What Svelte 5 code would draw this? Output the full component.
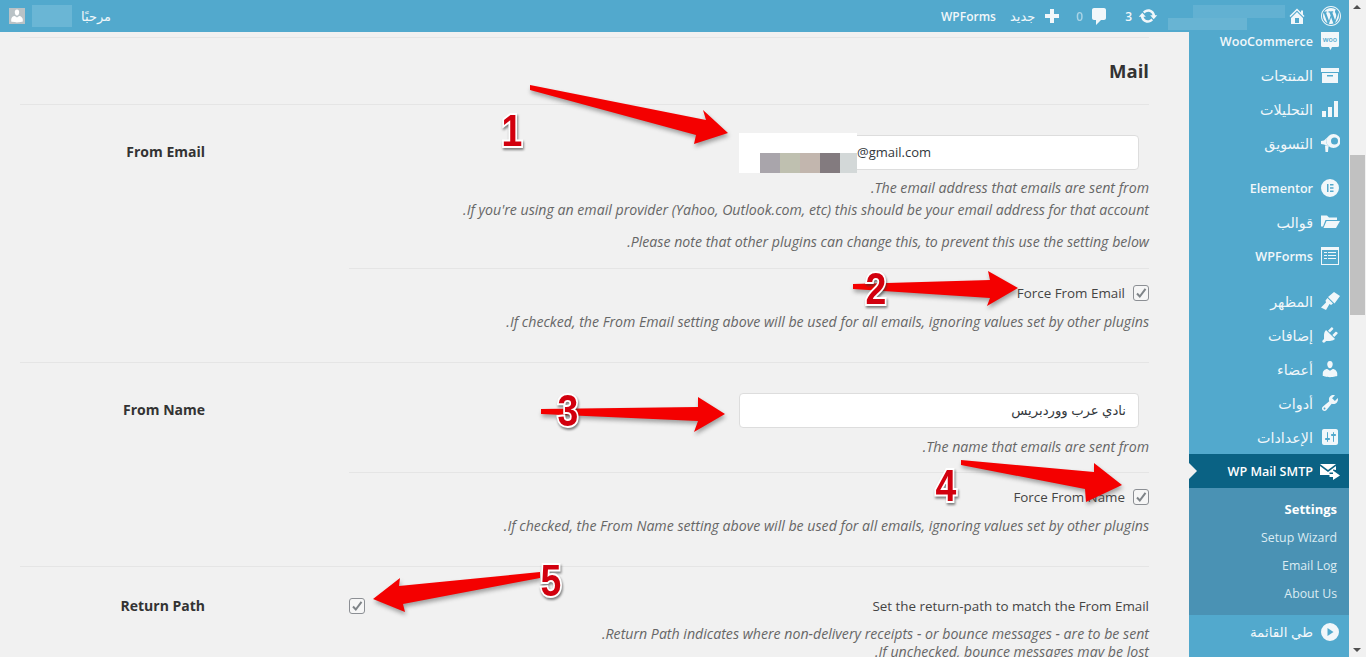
<script>
    const icons = {
        wordpress: "M20 10c0-5.52-4.48-10-10-10S0 4.48 0 10s4.48 10 10 10 10-4.48 10-10zM10 1.01c4.96 0 8.99 4.02 8.99 8.99s-4.03 8.99-8.99 8.99S1.01 14.96 1.01 10 5.04 1.01 10 1.01zM8.01 14.82L4.96 6.61c.49-.03 1.05-.08 1.05-.08.43-.05.38-1.01-.06-.99 0 0-1.29.1-2.13.1-.15 0-.33 0-.52-.01 1.44-2.17 3.9-3.6 6.7-3.6 2.09 0 3.99.79 5.41 2.09-.6-.08-1.45.35-1.45 1.42 0 .66.38 1.22.79 1.88.31.54.5 1.22.5 2.21 0 1.34-1.27 4.48-1.27 4.48l-2.71-7.5c.48-.03.75-.16.75-.16.43-.05.38-1.1-.05-1.08 0 0-1.3.11-2.14.11-.78 0-2.11-.11-2.11-.11-.43-.02-.48 1.06-.05 1.08l.84.08 1.12 3.04zm6.02 2.15L16.64 10s.67-1.69.39-3.81c.63 1.14.94 2.42.94 3.81 0 2.96-1.56 5.58-3.94 6.97zM2.68 6.77L6.5 17.25c-2.67-1.3-4.47-4.08-4.47-7.25 0-1.16.2-2.23.65-3.23zm7.45 4.53l2.29 6.25c-.75.27-1.57.42-2.42.42-.72 0-1.41-.11-2.06-.3z",
        home: "M16 8.5l1.53 1.53-1.06 1.06L10 4.62l-6.47 6.47-1.06-1.06L10 2.5l4 4v-2h2v4zm-6-2.46l6 5.99V18H4v-5.97zM12 17v-5H8v5h4z",
        updates: "M10.2 3.28c3.53 0 6.43 2.61 6.92 6h2.08l-3.5 4-3.5-4h2.32c-.45-1.97-2.21-3.45-4.32-3.45-1.45 0-2.73.71-3.54 1.78L4.95 5.66C6.23 4.2 8.11 3.28 10.2 3.28zm-.4 13.44c-3.52 0-6.43-2.61-6.92-6H.8l3.5-4c1.17 1.33 2.33 2.67 3.5 4H5.48c.45 1.97 2.21 3.45 4.32 3.45 1.45 0 2.73-.71 3.54-1.78l1.71 1.95c-1.28 1.46-3.15 2.38-5.25 2.38z",
        comment: "M5 2h10c1.1 0 2 .9 2 2v8c0 1.1-.9 2-2 2h-3l-5 5v-5H5c-1.1 0-2-.9-2-2V4c0-1.1.9-2 2-2z",
        plus: "M17 8v4h-5v5H8v-5H3V8h5V3h4v5h5z",
        woo: "M2.5 0h15A1.5 1.5 0 0 1 19 1.500v13a1.500 1.500 0 0 1-1.500 1.500H12l-1.500 3L9 16H2.500A1.500 1.500 0 0 1 1 14.500v-13A1.500 1.500 0 0 1 2.500 0z",
        archive: "M1 3h18v4H1z M2 8h16v10H2z M7 10v1.500h6V10z",
        chart: "M2 12h4v6H2z M8 8h4v10H8z M14 2h4v16h-4z",
        megaphone: "M13.500 1a7 7 0 1 1 0 14 7 7 0 0 1 0-14z M14.500 4.500a3.500 3.500 0 1 0 0 7 3.500 3.500 0 0 0 0-7z M1 8v3l3 .5 5.400 2.500A7 7 0 0 1 9.400 2.500L4 7.500z M5 12.500l3.500 1-.5 5.500H5.500z",
        elementor: "M10 1a9 9 0 1 1 0 18 9 9 0 0 1 0-18z M7 6v8h1.500V6z M10 6v1.500h3.500V6z M10 9.200v1.500h3.500V9.200z M10 12.500V14h3.500v-1.500z",
        folder: "M1 3.500h6l2 2h8V8H5.500L3 14.500H1z M6.500 9H20l-4 7H3.500z",
        forms: "M1 1h18v18H1z M2 4v14h16V4z M4 6h3v1H4z M8 6h8v1H8z M4 9h3v1H4z M8 9h8v1H8z M4 12h3v1H4z M8 12h8v1H8z",
        brush: "M20 5l-6-4-6 5 6.500 6.500z M7.500 7l5.500 5.500-2 1.500-1.500-1-3.500 6-5-2.500 5-5-.5-2z",
        plugin: "M13.110 4.360L9.870 7.600 8 5.730l3.240-3.240c.35-.34 1.050-.2 1.560.32.52.51.66 1.210.31 1.550zm-8 1.770l.91-1.120 9.010 9.010-1.190.84c-.71.71-2.630 1.160-3.820 1.160H6.140L4.900 17.260c-.59.59-1.540.59-2.120 0-.59-.58-.59-1.530 0-2.120l1.240-1.240v-3.880c0-1.130.4-3.190 1.090-3.890zm7.260 3.970l3.240-3.240c.34-.35 1.040-.21 1.550.31.52.51.66 1.210.31 1.550l-3.240 3.250z",
        user: "M10 9.250c-2.270 0-2.730-3.440-2.730-3.440C7 4.020 7.820 2 9.970 2c2.160 0 2.980 2.020 2.710 3.810 0 0-.41 3.440-2.680 3.440zm0 2.570L12.720 10c2.390 0 4.520 2.330 4.520 4.530v2.490s-3.650 1.130-7.240 1.130c-3.650 0-7.240-1.130-7.240-1.130v-2.490c0-2.250 1.940-4.480 4.470-4.480z",
        tools: "M16.680 9.770c-1.340 1.340-3.300 1.670-4.950.99l-5.410 6.520c-.99.99-2.590.99-3.580 0s-.99-2.590 0-3.570l6.520-5.420c-.68-1.650-.35-3.610.99-4.950 1.280-1.280 3.120-1.620 4.720-1.060l-2.890 2.890 2.820 2.820 2.860-2.870c.53 1.580.18 3.390-1.080 4.670zM3.810 16.210c.4.39 1.040.39 1.430 0 .4-.4.4-1.040 0-1.430-.39-.4-1.030-.4-1.430 0-.39.39-.39 1.030 0 1.430z",
        settings: "M18 16V4c0-1.100-.9-2-2-2H4c-1.100 0-2 .9-2 2v12c0 1.100.9 2 2 2h12c1.100 0 2-.9 2-2zM8 11h1c.55 0 1 .45 1 1s-.45 1-1 1H8v1.500c0 .28-.22.5-.5.5s-.5-.22-.5-.5V13H6c-.55 0-1-.45-1-1s.45-1 1-1h1V5.500c0-.28.22-.5.5-.5s.5.22.5.5V11zm5-2h-1c-.55 0-1-.45-1-1s.45-1 1-1h1V5.500c0-.28.22-.5.5-.5s.5.22.5.5V7h1c.55 0 1 .45 1 1s-.45 1-1 1h-1v5.500c0 .28-.22.5-.5.5s-.5-.22-.5-.5V9z",
        mail: "M0 3h16L8 9z M0 5v9h9.500v-2.500H13V8.500L16 9V5L8 11z M13 9.500l7 5-7 4.500v-3H9.500v-3H13z",
        collapse: "M10 1a9 9 0 1 1 0 18 9 9 0 0 1 0-18z M7.500 6v8l6-4z"
    };

    const menu = [
        { label: "WooCommerce", icon: "woo", iconText: "woo", latin: true },
        { label: "المنتجات", icon: "archive" },
        { label: "التحليلات", icon: "chart" },
        { label: "التسويق", icon: "megaphone", gapAfter: true },
        { label: "Elementor", icon: "elementor", latin: true },
        { label: "قوالب", icon: "folder" },
        { label: "WPForms", icon: "forms", gapAfter: true, latin: true },
        { label: "المظهر", icon: "brush" },
        { label: "إضافات", icon: "plugin" },
        { label: "أعضاء", icon: "user" },
        { label: "أدوات", icon: "tools" },
        { label: "الإعدادات", icon: "settings" }
    ];
    const submenu = ["Settings", "Setup Wizard", "Email Log", "About Us"];

    // tail top, upper joint, upper barb, tip, lower barb, lower joint, tail bottom
    const arrows = [
        "530,85 706,120 703,110 728,133 694,144 696,135 530,90",
        "853,284 990,280 988,271 1018,288 987,306 990,298 853,289",
        "541,409 698,407 698,397 725,414 694,432 698,421 541,414",
        "961,460 1094,472 1094,463 1122,485 1086,502 1085,489 961,465",
        "540,572 399,586 400,578 373,599 405,612 403,604 540,578"
    ];
    const numbers = [
        { n: 1, x: 512, y: 146 },
        { n: 2, x: 876, y: 304 },
        { n: 3, x: 568, y: 426 },
        { n: 4, x: 946, y: 501 },
        { n: 5, x: 551, y: 596 }
    ];
</script>

{#snippet icon(name, size = 20)}
    <svg class="icon" width={size} height={size} viewBox="0 0 20 20" aria-hidden="true">
        <path fill-rule="evenodd" d={icons[name]} />
    </svg>
{/snippet}

{#snippet check()}
    <span class="check">
        <svg width="12" height="12" viewBox="0 0 12 12" aria-hidden="true">
            <path d="M2 6.500l2.800 3L10.500 1.800" fill="none" stroke="#7f8488" stroke-width="2" />
        </svg>
    </span>
{/snippet}

<div class="shell">
    <div class="page" dir="rtl">
        <header class="topbar">
            <span class="tb-wp">{@render icon("wordpress", 20)}</span>
            <span class="tb-home">{@render icon("home", 20)}</span>
            <span class="tb-blur"><i></i><i></i></span>
            <span class="tb-item tb-updates">{@render icon("updates", 20)}<b>3</b></span>
            <span class="tb-item tb-comments">{@render icon("comment", 20)}<b class="faded">0</b></span>
            <span class="tb-item tb-new">{@render icon("plus", 20)}<span>جديد</span></span>
            <span class="tb-forms">WPForms</span>
            <span class="tb-hello">مرحبًا</span>
            <span class="tb-name"></span>
            <span class="avatar">
                <svg width="16" height="16" viewBox="0 0 20 20" aria-hidden="true"><path fill="#fff" d={icons.user} /></svg>
            </span>
        </header>

        <div class="body">
            <nav class="sidebar">
                <ul class="menu">
                    {#each menu as item}
                        <li class:gap={item.gapAfter} class:latin={item.latin}>
                            <span class="m-icon">
                                <svg width="20" height="20" viewBox="0 0 20 20" aria-hidden="true">
                                    <path fill-rule="evenodd" d={icons[item.icon]} />
                                    {#if item.iconText}<text x="10" y="10.500" class="woo" text-anchor="middle">{item.iconText}</text>{/if}
                                </svg>
                            </span>
                            <span>{item.label}</span>
                        </li>
                    {/each}
                    <li class="active latin">
                        <span class="m-icon">{@render icon("mail", 20)}</span>
                        <span>WP Mail SMTP</span>
                    </li>
                </ul>
                <ul class="submenu">
                    {#each submenu as sub, i}
                        <li class:current={i === 0}>{sub}</li>
                    {/each}
                </ul>
                <div class="collapse">
                    <span class="m-icon">{@render icon("collapse", 20)}</span>
                    <span>طي القائمة</span>
                </div>
            </nav>

            <main class="content">
                <h2>Mail</h2>

                <section class="row first">
                    <div class="label" dir="ltr">From Email</div>
                    <div class="field">
                        <div class="input" dir="ltr">@gmail.com<span class="redact"><i></i><i></i><i></i><i></i><i></i></span></div>
                        <p class="desc top">The email address that emails are sent from.</p>
                        <p class="desc">If you're using an email provider (Yahoo, Outlook.com, etc) this should be your email address for that account.</p>
                        <p class="desc para">Please note that other plugins can change this, to prevent this use the setting below.</p>
                        <hr />
                        <div class="opt">{@render check()}<span>Force From Email</span></div>
                        <p class="desc after">If checked, the From Email setting above will be used for all emails, ignoring values set by other plugins.</p>
                    </div>
                </section>

                <section class="row">
                    <div class="label" dir="ltr">From Name</div>
                    <div class="field">
                        <div class="input name">نادي عرب ووردبريس</div>
                        <p class="desc top">The name that emails are sent from.</p>
                        <hr class="near" />
                        <div class="opt">{@render check()}<span>Force From Name</span></div>
                        <p class="desc after">If checked, the From Name setting above will be used for all emails, ignoring values set by other plugins.</p>
                    </div>
                </section>

                <section class="row last">
                    <div class="label" dir="ltr">Return Path</div>
                    <div class="field">
                        <div class="opt spread"><span>Set the return-path to match the From Email</span>{@render check()}</div>
                        <p class="desc">Return Path indicates where non-delivery receipts - or bounce messages - are to be sent.</p>
                        <p class="desc tight">If unchecked, bounce messages may be lost.</p>
                    </div>
                </section>
            </main>
        </div>
    </div>

    <div class="scrollbar">
        <span class="up"></span>
        <span class="thumb"></span>
        <span class="down"></span>
    </div>

    <svg class="annotations" width="1366" height="657" viewBox="0 0 1366 657" aria-hidden="true">
        {#each arrows as points}
            <polygon class="arrow" {points} fill="#f40000" />
        {/each}
        {#each numbers as num}
            <text class="num" transform="translate({num.x} {num.y}) scale(.85 1)" text-anchor="middle">{num.n}</text>
        {/each}
    </svg>
</div>

<style>
    :global(body) {
        margin: 0;
        background: #f1f1f1;
    }

    .shell {
        position: relative;
        display: flex;
        width: 1366px;
        height: 657px;
        overflow: hidden;
        font-family: "Open Sans", "DejaVu Sans", sans-serif;
        font-size: 13px;
        color: #444;
    }
    .page {
        flex: 1;
        min-width: 0;
        display: flex;
        flex-direction: column;
    }
    .icon { fill: currentColor; display: block; }

    /* top bar */
    .topbar {
        flex: none;
        height: 32px;
        background: #52a9cd;
        color: #f1f7fa;
        display: flex;
        align-items: center;
        padding: 0 8px 0 9px;
        position: relative;
        z-index: 2;
        font-size: 12px;
    }
    .tb-wp { margin-inline-end: 14px; }
    .tb-home { margin-inline-end: 2px; }
    .tb-blur {
        width: 117px;
        height: 25px;
        display: flex;
        flex-direction: column;
        margin: 3px 0 0;
        margin-inline-end: 10px;
    }
    .tb-blur i { display: block; height: 13px; background: #62b1d2; width: 92px; }
    .tb-blur i:last-child { height: 12px; width: 79px; margin-right: 38px; background: #68b4d3; }
    .tb-item { display: flex; align-items: center; gap: 6px; }
    .tb-item b { font-weight: 600; }
    .tb-item .faded { opacity: .55; }
    .tb-updates { margin-inline-end: 16px; }
    .tb-comments { margin-inline-end: 14px; }
    .tb-new { margin-inline-end: 14px; gap: 7px; font-size: 13px; }
    .tb-forms { font-weight: 600; font-size: 12px; }
    .tb-hello { margin-inline-start: auto; font-size: 13px; }
    .tb-name { width: 40px; height: 22px; margin: 0 9px 0 7px; background: #6ab6d5; }
    .avatar {
        width: 16px;
        height: 16px;
        background: #b9c2c6;
        display: block;
    }
    .avatar svg { display: block; }

    .body {
        flex: 1;
        min-height: 0;
        display: flex;
    }

    /* sidebar */
    .sidebar {
        flex: none;
        width: 160px;
        background: #52a9cd;
        color: #f1f7fa;
        overflow: hidden;
        font-size: 14.3px;
    }
    .menu, .submenu {
        list-style: none;
        margin: 0;
        padding: 0;
    }
    .menu { margin-top: -8px; }
    .menu li, .collapse {
        height: 34px;
        display: flex;
        align-items: center;
        gap: 7px;
        padding-right: 9px;
    }
    .menu li.latin { font-weight: 600; font-size: 12.6px; }
    .menu li.gap { margin-bottom: 11px; }
    .m-icon { width: 20px; height: 20px; flex: none; }
    .m-icon svg { fill: currentColor; display: block; }
    .woo { font-size: 7px; fill: #52a9cd; font-family: "Open Sans", sans-serif; font-weight: 600; }
    .menu li.active {
        position: relative;
        background: #0a6284;
        color: #fff;
    }
    .menu li.active::after {
        content: "";
        position: absolute;
        left: 0;
        top: 9px;
        border: 8px solid transparent;
        border-left-color: #f1f1f1;
    }
    .submenu {
        background: #4a92b4;
        color: #dcecf3;
        padding: 7px 12px 7px 0;
        font-size: 12.3px;
        text-align: right;
    }
    .submenu li { height: 28px; line-height: 28px; }
    .submenu li.current { height: 29px; color: #fff; font-weight: 700; font-size: 13px; }
    .collapse { font-size: 13.5px; }

    /* settings */
    .content {
        flex: 1;
        min-width: 0;
        padding: 5px 40px 0 20px;
        overflow: hidden;
    }
    h2 {
        margin: 0;
        border-top: 1px solid #e5e5e5;
        height: 66px;
        line-height: 66px;
        font-size: 18.5px;
        font-weight: 700;
        color: #333;
        text-align: right;
    }
    .row {
        display: flex;
        flex-direction: row-reverse;
        border-top: 1px solid #e5e5e5;
        padding-top: 30px;
        height: 173px;
    }
    .row.first { height: 227px; }
    .row.last { padding-top: 22px; height: auto; }
    .label {
        flex: none;
        width: 329px;
        box-sizing: border-box;
        padding-right: 144px;
        text-align: right;
        font-weight: 700;
        font-size: 14px;
        line-height: 34px;
        color: #333;
    }
    .field { flex: 1; min-width: 0; }
    .input {
        position: relative;
        width: 400px;
        height: 35px;
        box-sizing: border-box;
        margin-right: 10px;
        background: #fff;
        border: 1px solid #ddd;
        border-radius: 4px;
        line-height: 33px;
        padding-left: 117px;
        font-size: 13px;
        color: #32373c;
    }
    .input.name { padding: 0 12px; font-size: 13.2px; }
    .redact {
        position: absolute;
        left: -1px;
        top: -3px;
        width: 118px;
        height: 40px;
        background: #fff;
        display: flex;
        align-items: flex-end;
        padding-left: 21px;
        box-sizing: border-box;
    }
    .redact i { width: 20px; height: 20px; background: #a9a5ab; }
    .redact i:nth-child(2) { background: #bfc0b0; }
    .redact i:nth-child(3) { background: #c2b6ae; }
    .redact i:nth-child(4) { background: #837b7f; }
    .redact i:nth-child(5) { width: 17px; background: #d3d8d8; }
    .desc {
        margin: 0;
        font-style: italic;
        font-size: 14.15px;
        line-height: 22px;
        color: #666;
        white-space: nowrap;
    }
    .desc.top { margin-top: 8px; }
    .first .desc.top { margin-top: 7px; }
    .desc.para { margin-top: 10px; }
    .desc.after { margin-top: 2px; }
    .desc.tight { margin-top: -4px; }
    hr {
        border: 0;
        border-top: 1px solid #e5e5e5;
        margin: 15px 0 0;
    }
    hr.near { margin-top: 14px; }
    .opt {
        display: flex;
        align-items: center;
        gap: 8px;
        height: 32px;
        margin-top: 8px;
        font-size: 13.4px;
        color: #444;
    }
    .opt.spread { justify-content: space-between; margin-top: 0; height: 34px; }
    .check {
        flex: none;
        width: 16px;
        height: 16px;
        box-sizing: border-box;
        border: 1px solid #8c8f94;
        border-radius: 3px;
        background: #f6f6f6;
        display: flex;
        align-items: center;
        justify-content: center;
    }

    /* scrollbar */
    .scrollbar {
        flex: none;
        width: 17px;
        height: 657px;
        background: #f1f1f1;
        position: relative;
    }
    .thumb {
        position: absolute;
        top: 155px;
        left: 1px;
        width: 15px;
        height: 160px;
        background: #c1c1c1;
    }
    .up, .down {
        position: absolute;
        left: 4px;
        border: 4px solid transparent;
    }
    .up { top: 1px; border-bottom-color: #505050; }
    .down { bottom: 1px; border-top-color: #505050; }

    /* annotations drawn over the screenshot */
    .annotations {
        position: absolute;
        inset: 0;
        z-index: 3;
        pointer-events: none;
    }
    .arrow { filter: drop-shadow(1px 3px 2px rgba(60, 60, 60, .45)); }
    .num {
        font-family: "Liberation Sans", sans-serif;
        font-weight: 700;
        font-size: 44px;
        fill: #d2000e;
        stroke: #fff;
        stroke-width: 4px;
        paint-order: stroke;
        filter: drop-shadow(1px 2px 1px rgba(50, 50, 50, .6));
    }
</style>
